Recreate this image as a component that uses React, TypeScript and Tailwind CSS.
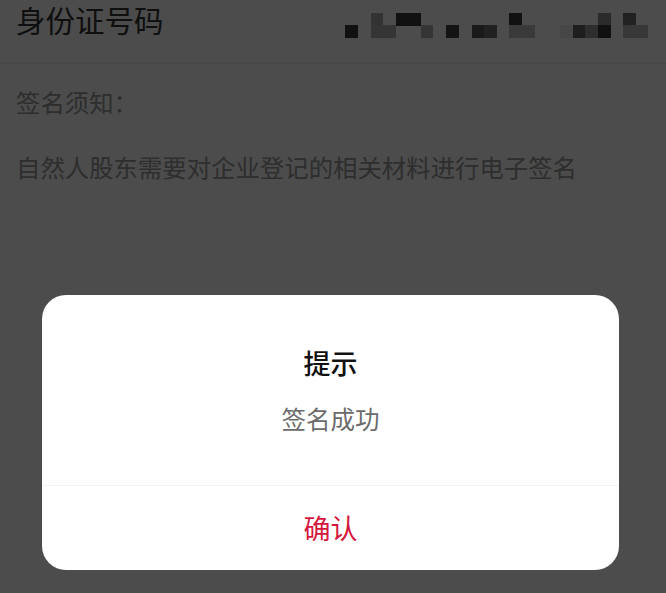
const blocks: [number, number, number, number, string][] = [
  [345, 25, 13, 13, '#393939'],
  [371, 13, 12, 12, '#aaaaaa'],
  [371, 25, 25, 13, '#b1b1b1'],
  [396, 13, 25, 13, '#393939'],
  [421, 25, 12, 13, '#b1b1b1'],
  [446, 25, 13, 13, '#434343'],
  [472, 25, 12, 13, '#575757'],
  [484, 25, 13, 13, '#717171'],
  [509, 13, 13, 12, '#393939'],
  [509, 25, 26, 13, '#c1c1c1'],
  [560, 25, 13, 13, '#ededed'],
  [573, 25, 12, 13, '#646464'],
  [585, 25, 13, 13, '#999999'],
  [598, 13, 13, 12, '#8c8c8c'],
  [598, 25, 13, 13, '#393939'],
  [623, 13, 13, 12, '#717171'],
  [623, 25, 25, 13, '#bbbbbb'],
];

function Mosaic() {
  // pixelated id number
  return (
    <svg width="303" height="25" viewBox="345 13 303 25" className="shrink-0">
      {blocks.map(([x, y, w, h, c], i) => (
        <rect key={i} x={x} y={y} width={w} height={h} fill={c} />
      ))}
    </svg>
  );
}

export default function App() {
  return (
    <div
      className="relative h-[593px] w-full overflow-hidden bg-white"
      style={{ fontFamily: '"Noto Sans CJK SC", "Noto Sans", sans-serif' }}
    >
      {/* Page */}
      <div className="flex h-[64px] items-start border-b border-[#f0f0f0]">
        <span className="pl-4 pt-[1px] text-[29.5px] leading-[36px] text-[#333]">身份证号码</span>
        <div className="ml-auto mr-[18px] mt-[13px]">
          <Mosaic />
        </div>
      </div>
      <div className="px-4 pt-[22px] text-[24.4px] leading-[32px] text-[#999]">
        <p>签名须知：</p>
        <p className="mt-[33px]">自然人股东需要对企业登记的相关材料进行电子签名</p>
      </div>

      {/* Overlay */}
      <div className="absolute inset-0 bg-black/70">
        <div className="ml-[42px] mt-[295px] w-[577px] overflow-hidden rounded-[24px] bg-white">
          <div className="flex flex-col items-center pb-[50px] pt-[50px]">
            <h2 className="text-[27px] font-medium leading-[36px] text-[#111]">提示</h2>
            <p className="mt-[22px] text-[24.5px] leading-[32px] text-[#6b6b6b]">签名成功</p>
          </div>
          <button className="flex h-[85px] w-full items-center justify-center border-t border-[#f2f2f2] text-[27px] leading-[36px] text-[#d6173c]">
            确认
          </button>
        </div>
      </div>
    </div>
  );
}
